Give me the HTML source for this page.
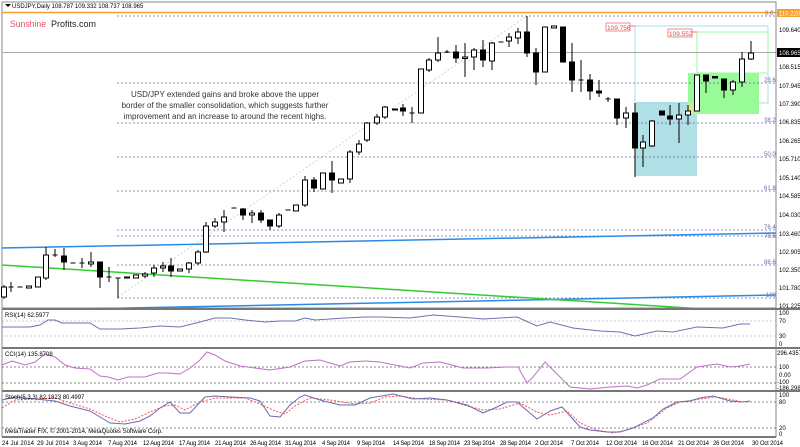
<!DOCTYPE html>
<html><head><meta charset="utf-8"><style>
body{margin:0;background:#fff;width:800px;height:447px;overflow:hidden;font-family:"Liberation Sans",sans-serif}
svg{display:block}
</style></head><body>
<svg width="800" height="447" viewBox="0 0 800 447" xmlns="http://www.w3.org/2000/svg" font-family="Liberation Sans, sans-serif">
<rect width="800" height="447" fill="#fff"/>
<rect x="2" y="2" width="774" height="306" fill="none" stroke="#888" stroke-width="1"/>
<path d="M5 4l3 3 3-3z" fill="#000"/>
<text x="12" y="8" font-size="6" fill="#000">USDJPY,Daily  108.787 109.332 108.737 108.965</text>
<line x1="2" y1="12.5" x2="776" y2="12.5" stroke="#f5a030" stroke-width="1.5"/>
<rect x="777" y="9" width="23" height="8" fill="#f5a030"/><text x="779" y="15.5" font-size="6" fill="#fff">110.220</text>
<text x="10" y="27" font-size="9.5" fill="#e8506a" textLength="36" lengthAdjust="spacingAndGlyphs">Sunshine</text><text x="51" y="27" font-size="9.5" fill="#222" textLength="45" lengthAdjust="spacingAndGlyphs">Profits.com</text>
<rect x="635" y="102" width="62" height="74" fill="#b0dfe6"/>
<rect x="635" y="26" width="133" height="77" fill="none" stroke="#a8dcec"/>
<rect x="688" y="73" width="71" height="41" fill="#98fb98"/>
<rect x="688" y="103" width="9" height="11" fill="#d8e890"/>
<rect x="697" y="32" width="71" height="41" fill="none" stroke="#98fb98"/>
<rect x="606" y="23" width="24" height="8" fill="#fff" stroke="#f07070" stroke-width=".8"/><text x="607" y="30" font-size="6.5" fill="#e04848">109.756</text>
<line x1="630" y1="26" x2="635" y2="26" stroke="#f07070"/>
<rect x="668" y="29" width="24" height="8" fill="#fff" stroke="#f07070" stroke-width=".8"/><text x="669" y="36" font-size="6.5" fill="#e04848">109.552</text>
<line x1="692" y1="32" x2="697" y2="32" stroke="#f07070"/>
<line x1="2" y1="52.5" x2="776" y2="52.5" stroke="#aaa"/>
<g stroke="#6a6aaa" stroke-dasharray="2,2" stroke-width=".8">
<line x1="117" y1="16" x2="776" y2="16"/><line x1="117" y1="83" x2="776" y2="83"/><line x1="117" y1="123" x2="776" y2="123"/><line x1="117" y1="157" x2="776" y2="157"/><line x1="117" y1="191" x2="776" y2="191"/><line x1="117" y1="230" x2="776" y2="230"/><line x1="117" y1="236" x2="776" y2="236"/><line x1="117" y1="265" x2="776" y2="265"/><line x1="117" y1="298" x2="776" y2="298"/>
</g>
<line x1="118" y1="297" x2="527" y2="16" stroke="#ccc" stroke-dasharray="2,2" stroke-width=".8"/>
<g font-size="6" fill="#6a6aaa"><text x="765" y="15">0.0</text><text x="764" y="82">23.6</text><text x="764" y="122">38.2</text><text x="764" y="156">50.0</text><text x="764" y="190">61.8</text><text x="764" y="229">76.4</text><text x="764" y="238">78.6</text><text x="764" y="264">88.6</text><text x="766" y="297">100</text></g>
<line x1="2" y1="248" x2="776" y2="233" stroke="#2a8ae8" stroke-width="1.5"/>
<line x1="80" y1="309" x2="776" y2="295" stroke="#2a8ae8" stroke-width="1.5"/>
<line x1="2" y1="265" x2="705" y2="309" stroke="#33cc33" stroke-width="1.5"/>
<g font-size="8" fill="#333" text-anchor="middle"><text x="225" y="97">USD/JPY extended gains and broke above the upper</text><text x="225" y="108">border of the smaller consolidation, which suggests further</text><text x="225" y="119">improvement and an increase to around the recent highs.</text></g>
<g stroke="#000" stroke-width="1">
<line x1="4" y1="285" x2="4" y2="299"/><rect x="1.5" y="287" width="5" height="10" fill="#fff"/>
<line x1="11" y1="282" x2="11" y2="292"/><line x1="8.5" y1="287" x2="13.5" y2="287"/>
<line x1="17.5" y1="287" x2="22.5" y2="287"/>
<rect x="26.5" y="286" width="5" height="2" fill="#fff"/>
<rect x="35.5" y="277" width="5" height="10" fill="#fff"/>
<line x1="46" y1="247" x2="46" y2="280"/><rect x="43.5" y="255" width="5" height="23" fill="#fff"/>
<line x1="55" y1="249" x2="55" y2="257"/><line x1="52.5" y1="255" x2="57.5" y2="255"/>
<line x1="64" y1="248" x2="64" y2="270"/><rect x="61.5" y="256" width="5" height="6" fill="#000"/>
<line x1="70.5" y1="263" x2="75.5" y2="263"/>
<line x1="82" y1="258" x2="82" y2="268"/><line x1="79.5" y1="263" x2="84.5" y2="263"/>
<line x1="91" y1="252" x2="91" y2="267"/><rect x="88.5" y="262" width="5" height="2" fill="#fff"/>
<line x1="100" y1="262" x2="100" y2="288"/><rect x="97.5" y="262" width="5" height="15" fill="#000"/>
<line x1="109" y1="267" x2="109" y2="282"/><line x1="106.5" y1="277" x2="111.5" y2="277"/>
<line x1="118" y1="278" x2="118" y2="298"/><line x1="115.5" y1="278" x2="120.5" y2="278"/>
<rect x="124.5" y="277" width="5" height="1" fill="#000"/>
<rect x="133.5" y="275" width="5" height="3" fill="#fff"/>
<line x1="145" y1="272" x2="145" y2="278"/><rect x="142.5" y="274" width="5" height="2" fill="#fff"/>
<line x1="154" y1="265" x2="154" y2="277"/><rect x="151.5" y="268" width="5" height="5" fill="#fff"/>
<line x1="163" y1="262" x2="163" y2="272"/><rect x="160.5" y="266" width="5" height="2" fill="#fff"/>
<line x1="171" y1="258" x2="171" y2="277"/><rect x="168.5" y="266" width="5" height="5" fill="#000"/>
<rect x="177.5" y="269" width="5" height="2" fill="#fff"/>
<line x1="189" y1="262" x2="189" y2="273"/><rect x="186.5" y="263" width="5" height="6" fill="#fff"/>
<line x1="198" y1="250" x2="198" y2="265"/><rect x="195.5" y="252" width="5" height="11" fill="#fff"/>
<line x1="206" y1="222" x2="206" y2="253"/><rect x="203.5" y="226" width="5" height="26" fill="#fff"/>
<line x1="215" y1="218" x2="215" y2="228"/><rect x="212.5" y="222" width="5" height="4" fill="#fff"/>
<line x1="224" y1="210" x2="224" y2="232"/><rect x="221.5" y="217" width="5" height="5" fill="#fff"/>
<line x1="231.5" y1="208" x2="236.5" y2="208"/>
<line x1="243" y1="208" x2="243" y2="220"/><rect x="240.5" y="209" width="5" height="6" fill="#000"/>
<line x1="252" y1="210" x2="252" y2="223"/><rect x="249.5" y="213" width="5" height="2" fill="#fff"/>
<line x1="261" y1="210" x2="261" y2="223"/><rect x="258.5" y="213" width="5" height="7" fill="#000"/>
<line x1="270" y1="220" x2="270" y2="230"/><rect x="267.5" y="220" width="5" height="6" fill="#000"/>
<line x1="279" y1="213" x2="279" y2="228"/><rect x="276.5" y="215" width="5" height="11" fill="#fff"/>
<line x1="285.5" y1="210" x2="290.5" y2="210"/>
<rect x="293.5" y="205" width="5" height="6" fill="#fff"/>
<line x1="305" y1="176" x2="305" y2="207"/><rect x="302.5" y="180" width="5" height="25" fill="#fff"/>
<line x1="314" y1="177" x2="314" y2="192"/><rect x="311.5" y="180" width="5" height="8" fill="#000"/>
<rect x="320.5" y="173" width="5" height="16" fill="#fff"/>
<line x1="332" y1="161" x2="332" y2="193"/><rect x="329.5" y="173" width="5" height="7" fill="#000"/>
<rect x="338.5" y="179" width="5" height="4" fill="#fff"/>
<line x1="350" y1="150" x2="350" y2="183"/><rect x="347.5" y="152" width="5" height="27" fill="#fff"/>
<line x1="359" y1="140" x2="359" y2="155"/><rect x="356.5" y="144" width="5" height="8" fill="#fff"/>
<line x1="367" y1="122" x2="367" y2="142"/><rect x="364.5" y="123" width="5" height="17" fill="#fff"/>
<line x1="377" y1="114" x2="377" y2="125"/><rect x="374.5" y="117" width="5" height="6" fill="#fff"/>
<line x1="385" y1="106" x2="385" y2="119"/><rect x="382.5" y="107" width="5" height="10" fill="#fff"/>
<rect x="392.5" y="109" width="5" height="1" fill="#fff"/>
<line x1="403" y1="104" x2="403" y2="116"/><rect x="400.5" y="108" width="5" height="3" fill="#000"/>
<line x1="412" y1="107" x2="412" y2="123"/><line x1="409.5" y1="113" x2="414.5" y2="113"/>
<rect x="418.5" y="69" width="5" height="44" fill="#fff"/>
<line x1="429" y1="58" x2="429" y2="72"/><rect x="426.5" y="60" width="5" height="10" fill="#fff"/>
<line x1="438" y1="37" x2="438" y2="62"/><rect x="435.5" y="53" width="5" height="7" fill="#fff"/>
<line x1="447" y1="50" x2="447" y2="53"/><line x1="444.5" y1="52" x2="449.5" y2="52"/>
<line x1="456" y1="45" x2="456" y2="63"/><rect x="453.5" y="52" width="5" height="6" fill="#000"/>
<line x1="465" y1="43" x2="465" y2="77"/><rect x="462.5" y="57" width="5" height="1.5" fill="#fff"/>
<line x1="474" y1="48" x2="474" y2="70"/><rect x="471.5" y="50" width="5" height="7" fill="#fff"/>
<line x1="483" y1="40" x2="483" y2="67"/><rect x="480.5" y="50" width="5" height="10" fill="#000"/>
<line x1="492" y1="42" x2="492" y2="70"/><rect x="489.5" y="43" width="5" height="18" fill="#fff"/>
<line x1="498.5" y1="42" x2="503.5" y2="42"/>
<line x1="509" y1="33" x2="509" y2="47"/><rect x="506.5" y="37" width="5" height="4" fill="#fff"/>
<line x1="518" y1="28" x2="518" y2="44"/><rect x="515.5" y="32" width="5" height="6" fill="#fff"/>
<line x1="527" y1="16" x2="527" y2="57"/><rect x="524.5" y="32" width="5" height="21" fill="#000"/>
<line x1="536" y1="48" x2="536" y2="85"/><rect x="533.5" y="53" width="5" height="19" fill="#000"/>
<rect x="542.5" y="27" width="5" height="45" fill="#fff"/>
<rect x="551.5" y="26" width="5" height="2" fill="#fff"/>
<rect x="560.5" y="27" width="5" height="35" fill="#000"/>
<line x1="572" y1="43" x2="572" y2="92"/><rect x="569.5" y="62" width="5" height="18" fill="#000"/>
<line x1="581" y1="60" x2="581" y2="92"/><line x1="578.5" y1="80" x2="583.5" y2="80"/>
<line x1="590" y1="74" x2="590" y2="100"/><rect x="587.5" y="80" width="5" height="11" fill="#000"/>
<line x1="599" y1="80" x2="599" y2="97"/><rect x="596.5" y="91" width="5" height="2" fill="#000"/>
<line x1="608" y1="97" x2="608" y2="102"/><line x1="605.5" y1="99" x2="610.5" y2="99"/>
<line x1="617" y1="99" x2="617" y2="125"/><rect x="614.5" y="99" width="5" height="19" fill="#000"/>
<line x1="626" y1="107" x2="626" y2="128"/><rect x="623.5" y="113" width="5" height="5" fill="#fff"/>
<line x1="635" y1="103" x2="635" y2="177"/><rect x="632.5" y="113" width="5" height="35" fill="#000"/>
<line x1="643" y1="135" x2="643" y2="167"/><rect x="640.5" y="142" width="5" height="6" fill="#fff"/>
<line x1="652" y1="120" x2="652" y2="147"/><rect x="649.5" y="121" width="5" height="25" fill="#fff"/>
<rect x="659.5" y="111" width="5" height="4" fill="#000"/>
<line x1="670" y1="105" x2="670" y2="125"/><rect x="667.5" y="116" width="5" height="3" fill="#000"/>
<line x1="679" y1="103" x2="679" y2="143"/><rect x="676.5" y="115" width="5" height="4" fill="#fff"/>
<line x1="688" y1="105" x2="688" y2="125"/><rect x="685.5" y="111" width="5" height="4" fill="#fff"/>
<rect x="694.5" y="75" width="5" height="36" fill="#fff"/>
<line x1="706" y1="75" x2="706" y2="93"/><rect x="703.5" y="75" width="5" height="6" fill="#000"/>
<rect x="712.5" y="76.5" width="5" height="1.5" fill="#000"/>
<line x1="724" y1="79" x2="724" y2="98"/><rect x="721.5" y="79" width="5" height="11" fill="#000"/>
<line x1="733" y1="80" x2="733" y2="95"/><rect x="730.5" y="82" width="5" height="8" fill="#fff"/>
<line x1="742" y1="52" x2="742" y2="87"/><rect x="739.5" y="59" width="5" height="23" fill="#fff"/>
<line x1="751" y1="41" x2="751" y2="60"/><rect x="748.5" y="53" width="5" height="6" fill="#fff"/>
</g>
<line x1="776" y1="2" x2="776" y2="437" stroke="#888"/>
<g font-size="6" fill="#000"><text x="779" y="32">109.640</text><text x="779" y="69">108.515</text><text x="779" y="88">107.945</text><text x="779" y="106">107.390</text><text x="779" y="124">106.835</text><text x="779" y="143">106.265</text><text x="779" y="161">105.710</text><text x="779" y="180">105.140</text><text x="779" y="198">104.585</text><text x="779" y="217">104.030</text><text x="779" y="236">103.460</text><text x="779" y="254">102.905</text><text x="779" y="272">102.350</text><text x="779" y="290">101.780</text><text x="779" y="308">101.225</text></g>
<rect x="777" y="48" width="23" height="9" fill="#000"/><text x="779" y="55" font-size="6" fill="#fff">108.965</text>
<g stroke="#777" stroke-width="2" fill="none">
<line x1="2" y1="309" x2="800" y2="309"/><line x1="2" y1="348" x2="800" y2="348"/><line x1="2" y1="391" x2="800" y2="391"/><line x1="2" y1="437" x2="776" y2="437"/>
</g>
<line x1="2" y1="309" x2="2" y2="437" stroke="#888"/>
<g stroke="#666" stroke-dasharray="2,2" stroke-width=".8">
<line x1="2" y1="321" x2="776" y2="321" stroke="#bbb"/><line x1="2" y1="336" x2="776" y2="336" stroke="#bbb"/>
<line x1="2" y1="367" x2="776" y2="367"/><line x1="2" y1="383" x2="776" y2="383"/>
<line x1="2" y1="402" x2="776" y2="402"/><line x1="2" y1="428" x2="776" y2="428"/>
</g>
<polyline fill="none" stroke="#7070b0" stroke-width="1" points="2,327 30,327 40,325 48,320 55,320 62,323 90,323 100,329 120,329 140,328 160,326 180,327 200,322 215,318 230,318 245,320 265,322 280,321 295,321 305,318 315,320 330,319 345,318 365,317 380,317 410,318 433,315 460,317 483,319 517,317 537,326 550,322 573,328 600,331 620,332 635,336 657,331 673,332 697,327 723,328 740,324 750,324"/>
<text x="5" y="317" font-size="6" fill="#000">RSI(14) 62.5977</text>
<g font-size="6" fill="#000"><text x="779" y="315">100</text><text x="779" y="323">70</text><text x="779" y="338">30</text><text x="779" y="346">0</text></g>
<polyline fill="none" stroke="#c070c8" stroke-width="1" points="2,365 12,361 25,365 35,362 45,354 55,357 65,365 75,368 90,369 100,376 108,377 118,380 128,377 145,377 158,373 168,373 180,374 190,368 200,360 207,352 215,355 225,361 240,366 255,368 270,370 290,367 305,361 320,360 340,366 350,362 365,361 380,362 410,368 423,363 440,362 463,368 487,368 507,367 518,367 527,383 533,377 545,362 557,374 570,387 590,389 610,387 627,386 637,388 647,385 660,379 680,379 697,367 717,364 730,367 740,366 750,364"/>
<text x="5" y="356" font-size="6" fill="#000">CCI(14) 135.8708</text>
<g font-size="6" fill="#000"><text x="777" y="355">296.4357</text><text x="779" y="369">100</text><text x="779" y="377">0.00</text><text x="777" y="384">-100</text><text x="777" y="390">-186.2989</text></g>
<polyline fill="none" stroke="#ff5050" stroke-width="1" stroke-dasharray="2,1.5" points="2,408 15,400 55,398 70,403 90,409 105,416 120,422 135,419 150,412 165,406 175,405 185,410 200,402 215,398 245,398 260,404 275,411 285,414 295,406 310,398 330,400 355,404 370,403 385,397 400,396 420,399 447,400 467,406 483,410 500,409 520,403 537,412 550,415 567,411 580,423 597,430 613,433 627,430 647,423 667,408 680,402 700,399 717,397 733,400 743,402 750,401"/>
<polyline fill="none" stroke="#6a6ab0" stroke-width="1" points="2,400 15,397 35,399 55,401 70,406 90,411 100,417 110,423 125,424 140,421 150,416 160,408 170,402 180,413 190,413 205,397 215,396 230,397 250,398 260,401 270,416 280,417 290,405 300,397 305,395 320,400 340,405 355,405 370,398 393,394 413,399 430,398 447,400 467,405 483,413 497,407 507,402 517,402 537,419 550,411 562,407 580,427 590,430 607,432 620,432 633,428 653,418 663,409 677,402 690,401 700,398 713,396 730,401 743,402 750,401"/>
<text x="5" y="399" font-size="6" fill="#000">Stoch(5,3,3) 82.1823 80.4997</text>
<text x="5" y="433" font-size="6" fill="#000">MetaTrader FIX, © 2001-2014, MetaQuotes Software Corp.</text>
<g font-size="6" fill="#000"><text x="779" y="397">100</text><text x="779" y="404">80</text><text x="779" y="430">20</text><text x="779" y="436">0</text></g>
<g font-size="6" fill="#000">
<text x="2" y="445" textLength="32">24 Jul 2014</text><text x="37" y="445" textLength="32">29 Jul 2014</text><text x="73" y="445" textLength="29">3 Aug 2014</text><text x="108" y="445" textLength="29">7 Aug 2014</text><text x="143" y="445" textLength="31">12 Aug 2014</text><text x="179" y="445" textLength="31">17 Aug 2014</text><text x="215" y="445" textLength="31">21 Aug 2014</text><text x="250" y="445" textLength="31">26 Aug 2014</text><text x="285" y="445" textLength="31">31 Aug 2014</text><text x="322" y="445" textLength="28">4 Sep 2014</text><text x="357" y="445" textLength="28">9 Sep 2014</text><text x="393" y="445" textLength="31">14 Sep 2014</text><text x="429" y="445" textLength="31">18 Sep 2014</text><text x="464" y="445" textLength="31">23 Sep 2014</text><text x="500" y="445" textLength="31">28 Sep 2014</text><text x="535" y="445" textLength="28">2 Oct 2014</text><text x="571" y="445" textLength="28">7 Oct 2014</text><text x="606" y="445" textLength="31">12 Oct 2014</text><text x="642" y="445" textLength="31">16 Oct 2014</text><text x="678" y="445" textLength="31">21 Oct 2014</text><text x="713" y="445" textLength="31">26 Oct 2014</text><text x="752" y="445" textLength="31">30 Oct 2014</text>
</g>
</svg>
</body></html>
